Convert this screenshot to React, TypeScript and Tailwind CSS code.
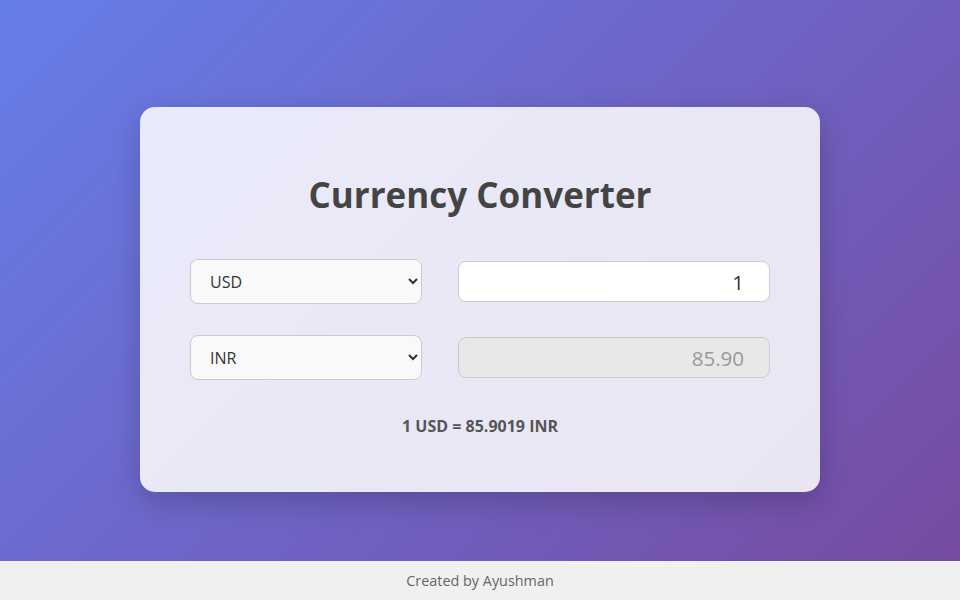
export default function App() {
  return (
    <div className="w-full h-[600px] flex flex-col font-['Open_Sans',sans-serif]">
      {/* Main gradient area */}
      <div className="flex-1 bg-[linear-gradient(135deg,#667eea_0%,#764ba2_100%)] pt-[107px] flex justify-center">
        <div className="w-[680px] h-[385px] bg-white/85 rounded-[15px] shadow-[0_10px_30px_rgba(0,0,0,0.2)] px-[50px] pt-[60px]">
          <h1 className="text-center text-[35px] leading-[56px] font-bold text-[#444]">
            Currency Converter
          </h1>

          <div className="mt-[36px] flex flex-col gap-[31px]">
            <div className="flex items-center justify-between">
              <select
                defaultValue="USD"
                className="w-[232px] h-[45px] rounded-lg border border-[#ccc] bg-[#f9f9f9] pl-[15px] pr-2 text-[16px] text-[#333] outline-none"
              >
                <option value="USD">USD</option>
                <option value="INR">INR</option>
                <option value="EUR">EUR</option>
              </select>
              <input
                type="text"
                defaultValue="1"
                className="w-[312px] h-[41px] rounded-lg border border-[#ccc] bg-white pl-6 pr-[25px] text-right text-[20.5px] text-[#333] outline-none"
              />
            </div>
            <div className="flex items-center justify-between">
              <select
                defaultValue="INR"
                className="w-[232px] h-[45px] rounded-lg border border-[#ccc] bg-[#f9f9f9] pl-[15px] pr-2 text-[16px] text-[#333] outline-none"
              >
                <option value="USD">USD</option>
                <option value="INR">INR</option>
                <option value="EUR">EUR</option>
              </select>
              <input
                type="text"
                readOnly
                value="85.90"
                className="w-[312px] h-[41px] rounded-lg border border-[#ccc] bg-[#e8e8e8] pl-6 pr-[25px] text-right text-[20.5px] text-[#999] outline-none"
              />
            </div>
          </div>

          <p className="mt-[34px] text-center text-[16px] font-bold text-[#555]">
            1 USD = 85.9019 INR
          </p>
        </div>
      </div>

      {/* Footer */}
      <footer className="h-[39px] bg-[#f0f0f0] flex items-center justify-center text-[14.4px] text-[#666]">
        Created by Ayushman
      </footer>
    </div>
  );
}
